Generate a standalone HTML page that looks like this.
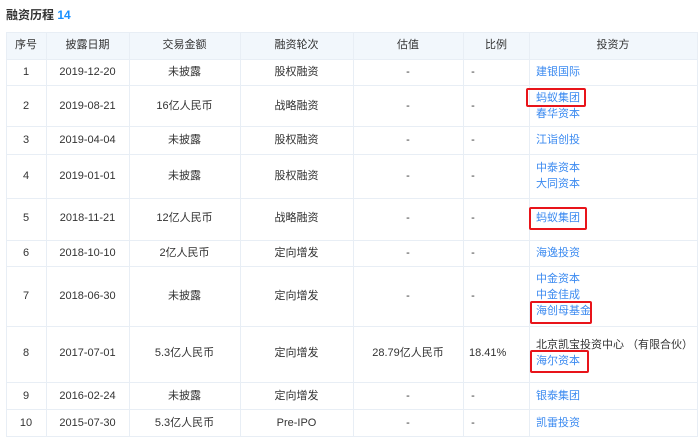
<!DOCTYPE html>
<html><head><meta charset="utf-8"><style>
body{margin:0;width:700px;height:445px;background:#fff;font-family:"Liberation Sans","Noto Sans CJK SC",sans-serif;font-size:11px;color:#333;position:relative;overflow:hidden}
.t{position:absolute;left:6px;top:6px;font-size:12px;font-weight:bold;color:#333}
.t span{color:#1890ff}
.hl{position:absolute;background:#e8eef5;height:1px;left:6px;width:691px}
.vl{position:absolute;background:#e8eef5;width:1px;top:32px;height:405px}
.hd{position:absolute;left:6px;top:32px;width:691px;height:27px;background:#f2f7fc}
.c{position:absolute;text-align:center;line-height:16px;white-space:nowrap}
.a{position:absolute;left:536px;line-height:16px;color:#3b8af0;white-space:nowrap}
.k{position:absolute;left:536px;line-height:16px;color:#333;white-space:nowrap}
.r{position:absolute;border:2px solid #e8141a;border-radius:2px}
</style></head><body>
<div class="t">融资历程 <span>14</span></div>
<div class="hd"></div>
<div class="hl" style="top:32px"></div><div class="hl" style="top:59px"></div><div class="hl" style="top:85px"></div><div class="hl" style="top:126px"></div><div class="hl" style="top:154px"></div><div class="hl" style="top:198px"></div><div class="hl" style="top:240px"></div><div class="hl" style="top:266px"></div><div class="hl" style="top:326px"></div><div class="hl" style="top:382px"></div><div class="hl" style="top:409px"></div><div class="hl" style="top:436px"></div>
<div class="vl" style="left:6px"></div><div class="vl" style="left:46px"></div><div class="vl" style="left:129px"></div><div class="vl" style="left:240px"></div><div class="vl" style="left:353px"></div><div class="vl" style="left:463px"></div><div class="vl" style="left:529px"></div><div class="vl" style="left:697px"></div>
<div id="cols"></div>
<!-- header -->
<div class="c" style="left:6px;width:40px;top:37px">序号</div>
<div class="c" style="left:46px;width:83px;top:37px">披露日期</div>
<div class="c" style="left:129px;width:111px;top:37px">交易金额</div>
<div class="c" style="left:240px;width:113px;top:37px">融资轮次</div>
<div class="c" style="left:353px;width:110px;top:37px">估值</div>
<div class="c" style="left:463px;width:66px;top:37px">比例</div>
<div class="c" style="left:529px;width:168px;top:37px">投资方</div>
<!-- rows: y centers -->
<div class="c" style="left:6px;width:40px;top:64px">1</div><div class="c" style="left:46px;width:83px;top:64px">2019-12-20</div><div class="c" style="left:129px;width:111px;top:64px">未披露</div><div class="c" style="left:240px;width:113px;top:64px">股权融资</div><div class="c" style="left:353px;width:110px;top:64px">-</div><div class="c" style="left:463px;width:20px;top:64px">-</div>
<div class="a" style="top:64px">建银国际</div>

<div class="c" style="left:6px;width:40px;top:98px">2</div><div class="c" style="left:46px;width:83px;top:98px">2019-08-21</div><div class="c" style="left:129px;width:111px;top:98px">16亿人民币</div><div class="c" style="left:240px;width:113px;top:98px">战略融资</div><div class="c" style="left:353px;width:110px;top:98px">-</div><div class="c" style="left:463px;width:20px;top:98px">-</div>
<div class="a" style="top:90px">蚂蚁集团</div><div class="a" style="top:106px">春华资本</div>
<div class="r" style="left:526px;top:88px;width:56px;height:15px"></div>

<div class="c" style="left:6px;width:40px;top:132px">3</div><div class="c" style="left:46px;width:83px;top:132px">2019-04-04</div><div class="c" style="left:129px;width:111px;top:132px">未披露</div><div class="c" style="left:240px;width:113px;top:132px">股权融资</div><div class="c" style="left:353px;width:110px;top:132px">-</div><div class="c" style="left:463px;width:20px;top:132px">-</div>
<div class="a" style="top:132px">江诣创投</div>

<div class="c" style="left:6px;width:40px;top:168px">4</div><div class="c" style="left:46px;width:83px;top:168px">2019-01-01</div><div class="c" style="left:129px;width:111px;top:168px">未披露</div><div class="c" style="left:240px;width:113px;top:168px">股权融资</div><div class="c" style="left:353px;width:110px;top:168px">-</div><div class="c" style="left:463px;width:20px;top:168px">-</div>
<div class="a" style="top:160px">中泰资本</div><div class="a" style="top:176px">大同资本</div>

<div class="c" style="left:6px;width:40px;top:210px">5</div><div class="c" style="left:46px;width:83px;top:210px">2018-11-21</div><div class="c" style="left:129px;width:111px;top:210px">12亿人民币</div><div class="c" style="left:240px;width:113px;top:210px">战略融资</div><div class="c" style="left:353px;width:110px;top:210px">-</div><div class="c" style="left:463px;width:20px;top:210px">-</div>
<div class="a" style="top:210px">蚂蚁集团</div>
<div class="r" style="left:529px;top:207px;width:54px;height:19px"></div>

<div class="c" style="left:6px;width:40px;top:245px">6</div><div class="c" style="left:46px;width:83px;top:245px">2018-10-10</div><div class="c" style="left:129px;width:111px;top:245px">2亿人民币</div><div class="c" style="left:240px;width:113px;top:245px">定向增发</div><div class="c" style="left:353px;width:110px;top:245px">-</div><div class="c" style="left:463px;width:20px;top:245px">-</div>
<div class="a" style="top:245px">海逸投资</div>

<div class="c" style="left:6px;width:40px;top:288px">7</div><div class="c" style="left:46px;width:83px;top:288px">2018-06-30</div><div class="c" style="left:129px;width:111px;top:288px">未披露</div><div class="c" style="left:240px;width:113px;top:288px">定向增发</div><div class="c" style="left:353px;width:110px;top:288px">-</div><div class="c" style="left:463px;width:20px;top:288px">-</div>
<div class="a" style="top:271px">中金资本</div><div class="a" style="top:287px">中金佳成</div><div class="a" style="top:303px">海创母基金</div>
<div class="r" style="left:530px;top:301px;width:58px;height:19px"></div>

<div class="c" style="left:6px;width:40px;top:345px">8</div><div class="c" style="left:46px;width:83px;top:345px">2017-07-01</div><div class="c" style="left:129px;width:111px;top:345px">5.3亿人民币</div><div class="c" style="left:240px;width:113px;top:345px">定向增发</div><div class="c" style="left:353px;width:110px;top:345px">28.79亿人民币</div><div class="c" style="left:463px;width:66px;top:345px;text-align:left;text-indent:6px">18.41%</div>
<div class="k" style="top:337px">北京凯宝投资中心 （有限合伙）</div><div class="a" style="top:353px">海尔资本</div>
<div class="r" style="left:530px;top:350px;width:55px;height:19px"></div>

<div class="c" style="left:6px;width:40px;top:388px">9</div><div class="c" style="left:46px;width:83px;top:388px">2016-02-24</div><div class="c" style="left:129px;width:111px;top:388px">未披露</div><div class="c" style="left:240px;width:113px;top:388px">定向增发</div><div class="c" style="left:353px;width:110px;top:388px">-</div><div class="c" style="left:463px;width:20px;top:388px">-</div>
<div class="a" style="top:388px">银泰集团</div>

<div class="c" style="left:6px;width:40px;top:415px">10</div><div class="c" style="left:46px;width:83px;top:415px">2015-07-30</div><div class="c" style="left:129px;width:111px;top:415px">5.3亿人民币</div><div class="c" style="left:240px;width:113px;top:415px">Pre-IPO</div><div class="c" style="left:353px;width:110px;top:415px">-</div><div class="c" style="left:463px;width:20px;top:415px">-</div>
<div class="a" style="top:415px">凯雷投资</div>
</body></html>
